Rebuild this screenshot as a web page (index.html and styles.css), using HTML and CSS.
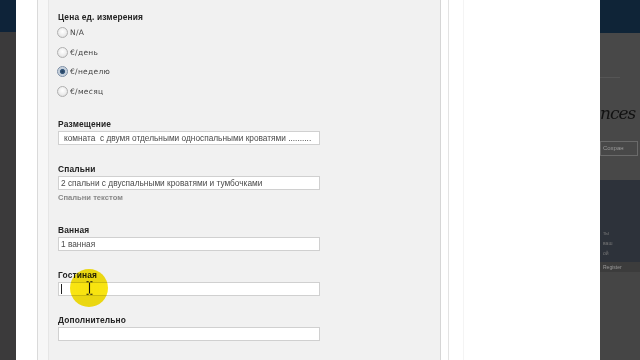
FILE: index.html
```html
<!DOCTYPE html>
<html lang="ru">
<head>
<meta charset="utf-8">
<link rel="stylesheet" href="styles.css">
</head>
<body>
<div class="screen">
  <div class="nav-strip"><div class="nav-top"></div></div>
  <div class="gutter"></div>
  <div class="gutter2"></div>
  <main class="panel">
    <div class="field-label">Цена ед. измерения</div>
    <div class="radios">
      <div class="radio-row"><span class="radio"></span><span class="radio-text">N/A</span></div>
      <div class="radio-row"><span class="radio"></span><span class="radio-text">€/день</span></div>
      <div class="radio-row"><span class="radio checked"></span><span class="radio-text">€/неделю</span></div>
      <div class="radio-row"><span class="radio"></span><span class="radio-text">€/месяц</span></div>
    </div>

    <div class="group">
      <div class="field-label">Размещение</div>
      <div class="input indent">комната&nbsp; с двумя отдельными односпальными кроватями ..........</div>
    </div>
    <div class="group with-help">
      <div class="field-label">Спальни</div>
      <div class="input">2 спальни с двуспальными кроватями и тумбочками</div>
      <div class="help">Спальни текстом</div>
    </div>
    <div class="group">
      <div class="field-label">Ванная</div>
      <div class="input">1 ванная</div>
    </div>
    <div class="group">
      <div class="field-label">Гостиная</div>
      <div class="input focus"><span class="caret"></span></div>
    </div>
    <div class="group">
      <div class="field-label">Дополнительно</div>
      <div class="input"></div>
    </div>

    <span class="highlight"></span>
    <svg class="ibeam" width="7" height="14" viewBox="0 0 7 14"><path d="M0.5 0.8h2.2M4.3 0.8h2.2M3.5 1.5v11M0.5 13.2h2.2M4.3 13.2h2.2" stroke="#111" stroke-width="1.1" fill="none"/></svg>
  </main>
  <div class="side">
    <div class="side-inner"><div class="side-col"></div></div>
  </div>
  <div class="site">
    <div class="site-top"></div>
    <div class="site-hero">
      <div class="site-rule"></div>
      <div class="script">nces</div>
      <div class="site-btn">Сохран</div>
    </div>
    <div class="site-band">
      <div class="tiny">ты</div>
      <div class="tiny">ваш</div>
      <div class="tiny">ой</div>
    </div>
    <div class="site-reg">Register</div>
    <div class="site-bottom"></div>
  </div>
</div>
</body>
</html>
```

FILE: styles.css
```css
html, body {
  margin: 0;
  padding: 0;
  width: 640px;
  height: 360px;
  overflow: hidden;
  background: #f1f1f1;
}

.screen {
  display: flex;
  width: 640px;
  height: 360px;
  font-family: "Liberation Sans", Arial, sans-serif;
}

.nav-strip {
  width: 16px;
  flex: none;
  background: #3b3a3b;
}
.nav-top {
  height: 32px;
  background: #0e2339;
}

.gutter {
  width: 21px;
  flex: none;
  background: #ffffff;
  border-right: 1px solid #dadada;
}

.gutter2 {
  width: 10px;
  flex: none;
  background: #f7f7f7;
  border-right: 1px solid #e6e6e6;
}

.panel {
  width: 382px;
  flex: none;
  background: #f1f1f1;
  padding: 11px 0 0 9px;
  position: relative;
}

.field-label {
  font-size: 8.4px;
  font-weight: bold;
  line-height: 12px;
  height: 12px;
  color: #222222;
  letter-spacing: 0.15px;
}

.radios {
  margin-bottom: 17px;
}
.radio-row {
  height: 19.5px;
  display: flex;
  align-items: center;
}
.radio {
  box-sizing: border-box;
  width: 11px;
  height: 11px;
  border-radius: 50%;
  border: 1px solid #b0b0b0;
  background: radial-gradient(circle at 50% 40%, #ffffff 0%, #ededed 55%, #d2d2d2 100%);
  margin-left: -1px;
  margin-right: 2px;
}
.radio.checked {
  border-color: #7d8fa6;
  background: radial-gradient(circle at 50% 50%, #24405f 0%, #36587c 34%, #bfcbd8 46%, #e3e9f0 100%);
}
.radio-text {
  font-family: "DejaVu Sans", Verdana, sans-serif;
  font-size: 7.5px;
  color: #444444;
  letter-spacing: 0.3px;
}

.group {
  margin-bottom: 18px;
}
.group .field-label {
  margin-bottom: 1px;
}
.group.with-help {
  margin-bottom: 20px;
}

.input {
  box-sizing: border-box;
  width: 262px;
  height: 14px;
  background: #ffffff;
  border: 1px solid #d0d0d0;
  font-size: 8.3px;
  line-height: 12px;
  color: #4a4a4a;
  padding-left: 2px;
  white-space: nowrap;
  overflow: hidden;
  position: relative;
}
.input.indent {
  padding-left: 5px;
}

.help {
  font-size: 7.6px;
  font-weight: bold;
  color: #888888;
  line-height: 12px;
  margin-top: 2px;
}

.caret {
  position: absolute;
  left: 2px;
  top: 1px;
  width: 1px;
  height: 10px;
  background: #222;
}
.highlight {
  position: absolute;
  left: 21px;
  top: 269px;
  width: 38px;
  height: 38px;
  border-radius: 50%;
  background: radial-gradient(circle, rgba(248, 226, 0, 0.95) 0%, rgba(248, 226, 0, 0.92) 76%, rgba(248, 230, 40, 0.5) 92%, rgba(248, 230, 60, 0) 100%);
  mix-blend-mode: multiply;
}
.ibeam {
  position: absolute;
  left: 37px;
  top: 281px;
}

.side {
  width: 159px;
  flex: none;
  background: #ffffff;
  border-left: 1px solid #d6d6d6;
}
.side-inner {
  height: 100%;
  margin-left: 7px;
  border-left: 1px solid #e3e3e3;
}
.side-col {
  height: 100%;
  margin-left: 14px;
  border-left: 1px solid #f4f4f4;
}

.site {
  width: 40px;
  flex: none;
  background: #454545;
  display: flex;
  flex-direction: column;
  overflow: hidden;
}
.site-top {
  height: 33px;
  background: #0f2437;
}
.site-hero {
  height: 147px;
  background: #484848;
}
.site-rule {
  margin-top: 44px;
  height: 1px;
  width: 20px;
  background: #555;
}
.script {
  margin-top: 24px;
  font-family: "DejaVu Serif", serif;
  font-style: italic;
  font-size: 17px;
  line-height: 22px;
  color: #111;
  letter-spacing: -1px;
  white-space: nowrap;
}
.site-btn {
  margin-top: 17px;
  width: 34px;
  height: 13px;
  border: 1px solid #6a6a6a;
  font-size: 6px;
  line-height: 13px;
  color: #9a9a9a;
  padding-left: 2px;
  white-space: nowrap;
  overflow: hidden;
}
.site-band {
  height: 82px;
  background: #2d323a;
  padding-top: 48px;
  box-sizing: border-box;
}
.tiny {
  font-size: 5px;
  line-height: 10px;
  color: #777;
  padding-left: 3px;
}
.site-reg {
  font-size: 5px;
  line-height: 10px;
  color: #999;
  padding-left: 3px;
  background: #3c3c3c;
  white-space: nowrap;
}
.site-bottom {
  flex: 1;
  background: #454545;
}
```
